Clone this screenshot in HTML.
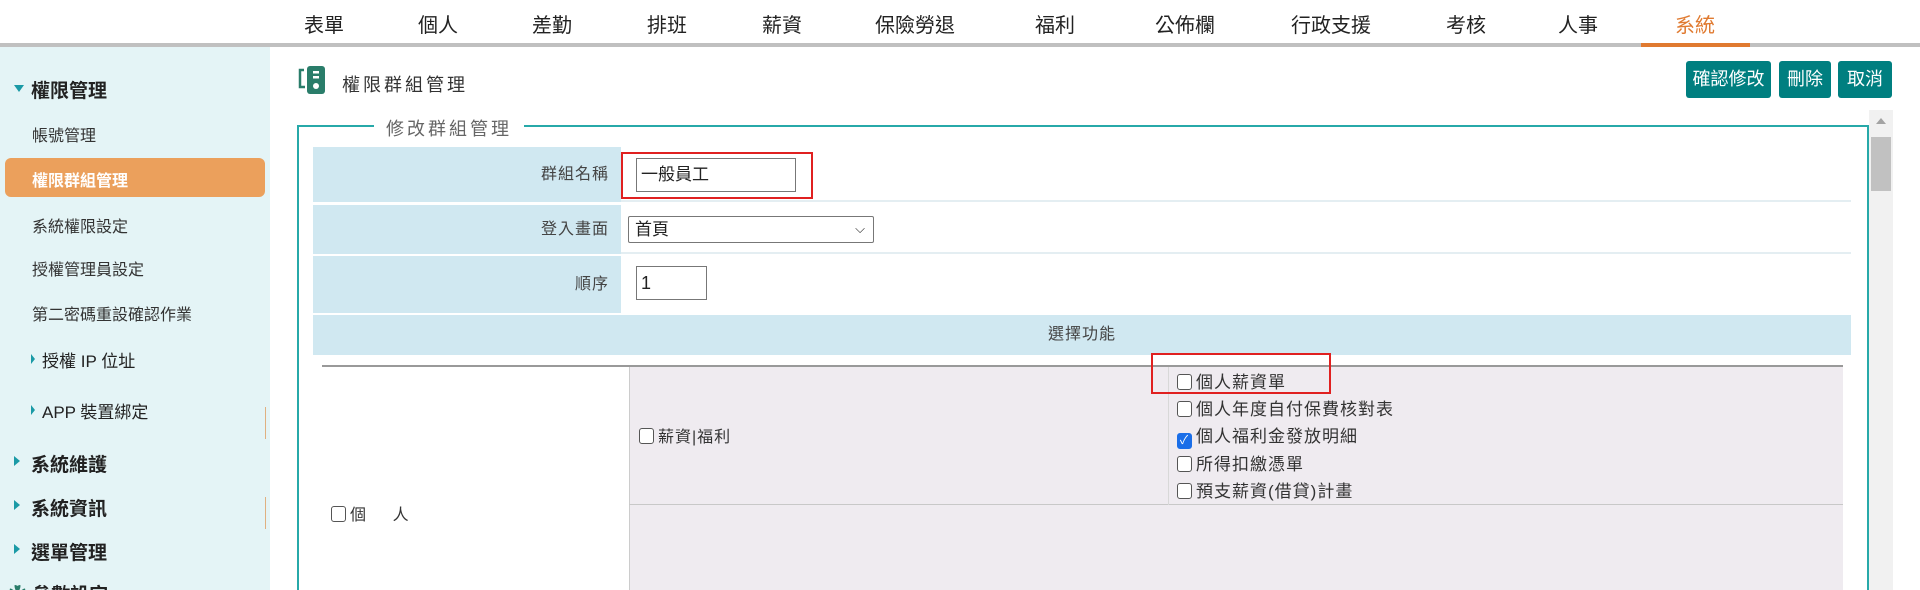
<!DOCTYPE html>
<html><head><meta charset="utf-8"><style>
*{margin:0;padding:0;box-sizing:border-box}
html,body{overflow:hidden}
body{width:1920px;height:590px;background:#fff;font-family:"Liberation Sans","Noto Sans CJK TC",sans-serif;color:#333;position:relative}
.a{position:absolute;white-space:nowrap}
.nav{font-size:20px;color:#222;top:9px;transform:translateX(-50%)}
.side{position:absolute;left:0;top:47px;width:270px;height:543px;background:#e4f4f6;overflow:hidden}
.h{font-size:19px;color:#222;font-weight:bold}
.s{font-size:16px;color:#333}
.tri{width:0;height:0;border-top:5px solid transparent;border-bottom:5px solid transparent;border-left:6px solid #1a9aa6;position:absolute}
.btn{position:absolute;top:61px;height:37px;background:#007f80;color:#fff;font-size:18px;line-height:37px;text-align:center;border-radius:3px}
.lab{position:absolute;left:313px;width:308px;background:#d0e8f1;text-align:right;padding-right:12px;font-size:16px;color:#444;letter-spacing:1px}
.cb{display:inline-block;width:15px;height:16px;border:1.5px solid #555;border-radius:3px;background:#fff;vertical-align:-2px;margin-right:4px}
.it{position:absolute;left:1177px;font-size:17px;color:#333;letter-spacing:1px}
</style></head><body>
<div class="a nav" style="left:324px">表單</div>
<div class="a nav" style="left:438px">個人</div>
<div class="a nav" style="left:552px">差勤</div>
<div class="a nav" style="left:667px">排班</div>
<div class="a nav" style="left:782px">薪資</div>
<div class="a nav" style="left:915px">保險勞退</div>
<div class="a nav" style="left:1055px">福利</div>
<div class="a nav" style="left:1185px">公佈欄</div>
<div class="a nav" style="left:1331px">行政支援</div>
<div class="a nav" style="left:1466px">考核</div>
<div class="a nav" style="left:1578px">人事</div>
<div class="a nav" style="left:1695px;color:#e07a30">系統</div>
<div class="a" style="left:0;top:43px;width:1920px;height:4px;background:#c0c0c0"></div>
<div class="a" style="left:1641px;top:43px;width:109px;height:4px;background:#e07a30"></div>

<div class="side">
<div class="tri" style="left:14px;top:38px;border-left:5px solid transparent;border-right:5px solid transparent;border-top:7px solid #1a9aa6;border-bottom:0"></div>
<div class="a h" style="left:31px;top:29px">權限管理</div>
<div class="a s" style="left:32px;top:75px">帳號管理</div>
<div class="a" style="left:5px;top:111px;width:260px;height:39px;background:#eba05c;border-radius:6px"></div>
<div class="a s" style="left:32px;top:120px;color:#fff;font-weight:bold">權限群組管理</div>
<div class="a s" style="left:32px;top:166px">系統權限設定</div>
<div class="a s" style="left:32px;top:209px">授權管理員設定</div>
<div class="a s" style="left:32px;top:254px">第二密碼重設確認作業</div>
<div class="tri" style="left:31px;top:307px;border-left-width:4px"></div>
<div class="a s" style="left:42px;top:300px;font-size:17px;color:#222">授權 IP 位址</div>
<div class="tri" style="left:31px;top:358px;border-left-width:4px"></div>
<div class="a s" style="left:42px;top:351px;font-size:17px;color:#222">APP 裝置綁定</div>
<div class="a" style="left:265px;top:360px;width:1px;height:32px;background:#e0b080"></div>
<div class="tri" style="left:14px;top:409px"></div>
<div class="a h" style="left:31px;top:403px">系統維護</div>
<div class="tri" style="left:14px;top:453px"></div>
<div class="a h" style="left:31px;top:447px">系統資訊</div>
<div class="a" style="left:265px;top:450px;width:1px;height:32px;background:#e0b080"></div>
<div class="tri" style="left:14px;top:497px"></div>
<div class="a h" style="left:31px;top:491px">選單管理</div>
<div class="a h" style="left:8px;top:533px;color:#2a7d6a">✿ <span style="color:#222">參數設定</span></div>
</div>

<svg class="a" style="left:297px;top:65px" width="30" height="30" viewBox="0 0 30 30">
<path d="M7 5H3v17h5" fill="none" stroke="#2a7d6a" stroke-width="2.5"/>
<rect x="10" y="1" width="18" height="28" rx="3" fill="#2a7d6a"/>
<rect x="16" y="6" width="6" height="2.5" fill="#fff"/><rect x="16" y="11" width="6" height="2.5" fill="#fff"/>
<circle cx="19" cy="21" r="3" fill="#fff"/></svg>
<div class="a" style="left:342px;top:71px;font-size:18px;letter-spacing:3px;color:#333">權限群組管理</div>
<div class="btn" style="left:1686px;width:85px">確認修改</div>
<div class="btn" style="left:1779px;width:52px">刪除</div>
<div class="btn" style="left:1838px;width:54px">取消</div>

<div class="a" style="left:297px;top:125px;width:1572px;height:480px;border:2px solid #27a9a9;border-bottom:0"></div>
<div class="a" style="left:374px;top:115px;background:#fff;padding:0 12px;font-size:18px;letter-spacing:3px;color:#666">修改群組管理</div>
<div class="a" style="left:1869px;top:110px;width:24px;height:480px;background:#f1f1f1"></div>
<div class="a" style="left:1876px;top:118px;width:0;height:0;border-left:5px solid transparent;border-right:5px solid transparent;border-bottom:6px solid #a3a3a3"></div>
<div class="a" style="left:1871px;top:137px;width:20px;height:54px;background:#c1c1c1"></div>

<div class="a" style="left:313px;top:147px;width:1538px;height:55px;border-bottom:2px solid #e4eef2"></div>
<div class="a" style="left:313px;top:204px;width:1538px;height:50px;border-bottom:2px solid #e4eef2"></div>
<div class="lab" style="top:147px;height:55px;line-height:55px">群組名稱</div>
<div class="lab" style="top:205px;height:49px;line-height:49px">登入畫面</div>
<div class="lab" style="top:256px;height:57px;line-height:57px">順序</div>
<div class="a" style="left:313px;top:315px;width:1538px;height:40px;background:#d0e8f1;text-align:center;line-height:40px;font-size:16px;color:#444;letter-spacing:1px">選擇功能</div>

<div class="a" style="left:621px;top:152px;width:192px;height:47px;border:2px solid #e02020"></div>
<div class="a" style="left:636px;top:158px;width:160px;height:34px;border:1px solid #777;font-size:17px;line-height:32px;padding-left:4px;color:#222">一般員工</div>
<div class="a" style="left:628px;top:216px;width:246px;height:27px;border:1px solid #777;border-radius:2px;font-size:17px;line-height:25px;padding-left:6px;color:#222">首頁<span style="position:absolute;right:8px;top:-1px;font-size:13px">⌵</span></div>
<div class="a" style="left:636px;top:266px;width:71px;height:34px;border:1px solid #777;font-size:18px;line-height:32px;padding-left:4px;color:#222">1</div>

<div class="a" style="left:322px;top:365px;width:1521px;height:2px;background:#999"></div>
<div class="a" style="left:629px;top:367px;width:1214px;height:223px;background:#efebf0;border-left:1px solid #ccc"></div>
<div class="a" style="left:629px;top:504px;width:1214px;height:1px;background:#c8c8c8"></div>
<div class="a" style="left:1168px;top:367px;width:1px;height:138px;background:#d8d8d8"></div>
<div class="a" style="left:331px;top:501px;font-size:16px;color:#333"><span class="cb"></span>個&nbsp;&nbsp;&nbsp;&nbsp;&nbsp;&nbsp;人</div>
<div class="a" style="left:639px;top:423px;font-size:16px;color:#333;letter-spacing:1px"><span class="cb"></span>薪資|福利</div>
<div class="it" style="top:368px"><span class="cb"></span>個人薪資單</div>
<div class="it" style="top:395px"><span class="cb"></span>個人年度自付保費核對表</div>
<div class="it" style="top:422px"><span class="cb" style="background:#1a6ee8;border-color:#1a6ee8;color:#fff;font-size:12px;line-height:13px;text-align:center">✓</span>個人福利金發放明細</div>
<div class="it" style="top:450px"><span class="cb"></span>所得扣繳憑單</div>
<div class="it" style="top:477px"><span class="cb"></span>預支薪資(借貸)計畫</div>
<div class="a" style="left:1151px;top:353px;width:180px;height:41px;border:2px solid #e02020"></div>
</body></html>
